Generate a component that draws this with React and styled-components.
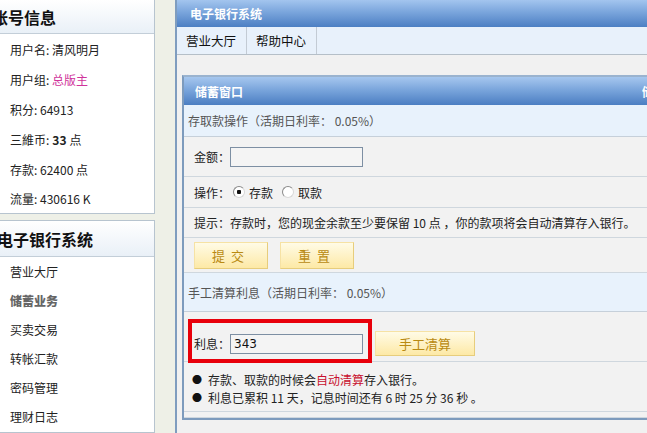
import styled, { createGlobalStyle } from 'styled-components';

const Global = createGlobalStyle`
  html, body {
    margin: 0;
    padding: 0;
    background: #eef0e7;
    overflow: hidden;
    font-family: "Noto Sans CJK SC", "DejaVu Sans", sans-serif;
    font-size: 12px;
    color: #222;
  }
`;

const Page = styled.div`
  display: flex;
  gap: 20px;
  height: 433px;
`;

const Sidebar = styled.div`
  width: 155px;
  flex: none;
  display: flex;
  flex-direction: column;
  gap: 6px;
`;

const Panel = styled.div`
  background: #fff;
  border-right: 1px solid #b7c4cf;
  border-bottom: 1px solid #b7c4cf;
  border-top: ${p => (p.$top ? '1px solid #b7c4cf' : 'none')};
  flex: ${p => (p.$grow ? 1 : 'none')};
`;

const PanelHead = styled.div`
  height: ${p => p.$h}px;
  display: flex;
  align-items: center;
  background: linear-gradient(#ffffff, #e9f0f7);
  border-bottom: 1px solid #c3ced8;
  font-size: 16px;
  font-weight: bold;
  color: #111;
  overflow: hidden;
  span {
    margin-left: ${p => p.$indent}px;
    white-space: nowrap;
  }
`;

const Item = styled.div`
  height: ${p => p.$h}px;
  display: flex;
  align-items: center;
  padding-left: 10px;
  color: ${p => (p.$active ? '#666' : '#222')};
  font-weight: ${p => (p.$active ? 800 : 'normal')};
  b { margin: 0 3px; }
`;

const Pink = styled.span`
  color: #d0339b;
`;

const Main = styled.div`
  flex: 1;
  min-width: 0;
  background: #f1f1f1;
  border-left: 2px solid #7f9dbf;
  overflow: hidden;
`;

const TopBar = styled.div`
  height: 27px;
  display: flex;
  align-items: center;
  padding-left: 13px;
  background: linear-gradient(#a3c5ee, #7aa5dc 45%, #4c7fc3);
  color: #fff;
  font-weight: bold;
`;

const Tabs = styled.div`
  height: 27px;
  display: flex;
  background: #e8f1fb;
  border-bottom: 1px solid #b5bfc8;
`;

const Tab = styled.div`
  padding: 0 10px 0 9px;
  display: flex;
  align-items: center;
  border-right: 1px solid #c3cbd4;
  font-size: 12.5px;
  color: #111;
`;

const Content = styled.div`
  padding: 20px 0 0 5px;
`;

const Box = styled.div`
  width: 520px;
  border: 2px solid #7d9bbd;
  border-top-color: #9ab3cf;
  background: #f2f2f2;
`;

const BoxHead = styled.div`
  height: 28px;
  display: flex;
  align-items: center;
  justify-content: space-between;
  padding: 0 14px 0 11px;
  background: linear-gradient(#a6c7ef, #76a2da 50%, #4b7ec2);
  color: #fff;
  font-weight: bold;
`;

const SectionHead = styled.div`
  height: ${p => p.$h}px;
  display: flex;
  align-items: center;
  padding-left: 4px;
  background: #e8f2fc;
  border-bottom: 1px solid #c6d0da;
  color: #555;
`;

const Row = styled.div`
  position: relative;
  height: ${p => p.$h}px;
  display: flex;
  align-items: center;
  gap: ${p => p.$gap || 0}px;
  padding: ${p => p.$pt || 0}px 0 0 10px;
  box-sizing: border-box;
  border-bottom: 1px solid #cfd7de;
  white-space: nowrap;
`;

const Field = styled.input`
  width: 133px;
  height: 20px;
  box-sizing: border-box;
  border: 1px solid #7d8fa3;
  background: #f4f4f4;
  padding: 0 3px;
  margin: 0 ${p => p.$mr || 0}px 0 0;
  font: 12px "DejaVu Sans", sans-serif;
  color: #111;
  outline: none;
`;

const Radio = styled.input`
  appearance: none;
  width: 12px;
  height: 12px;
  margin: 0 4px 0 3px;
  border-radius: 50%;
  border: 1px solid #8a8a8a;
  border-right-color: #d8d8d8;
  border-bottom-color: #d8d8d8;
  background: #fff;
  &:checked {
    background: radial-gradient(circle, #111 0 2px, #fff 2.5px);
  }
`;

const Choice = styled.label`
  display: flex;
  align-items: center;
  margin-right: 6px;
`;

const Button = styled.button`
  width: ${p => p.$w}px;
  height: ${p => p.$h}px;
  border: 1px solid #f6e2a4;
  border-right-color: #e7cd7c;
  border-bottom-color: #e7cd7c;
  background: linear-gradient(#fffbe6, #fde9a6);
  color: #b98a12;
  font: 13px "Noto Sans CJK SC", sans-serif;
  letter-spacing: ${p => p.$ls || 0}px;
  padding: 0;
`;

const Marker = styled.div`
  position: absolute;
  left: 4px;
  top: 7px;
  width: 184px;
  height: 44px;
  box-sizing: border-box;
  border: 4px solid #e8000b;
  pointer-events: none;
`;

const Notes = styled.ul`
  list-style: none;
  margin: 0;
  padding: 8px 0 5px 8px;
  border-bottom: 1px solid #cfd7de;
  li {
    height: 18px;
    display: flex;
    align-items: center;
    white-space: nowrap;
  }
  li::before {
    content: "●";
    font-size: 10px;
    margin-right: 6px;
    color: #111;
  }
`;

const Red = styled.span`
  color: #c8102e;
`;

const Spacer = styled.div`
  height: 5px;
  border-bottom: 1px solid #cfd7de;
`;

export default function App() {
  return (
    <>
      <Global />
      <Page>
        <Sidebar>
          <Panel>
            <PanelHead $h={33} $indent={-8}><span>帐号信息</span></PanelHead>
            <Item $h={30}>用户名: 清风明月</Item>
            <Item $h={30}>用户组: <Pink>&nbsp;总版主</Pink></Item>
            <Item $h={30}>积分: 64913</Item>
            <Item $h={30}>三維币: <b>33</b> 点</Item>
            <Item $h={30}>存款: 62400 点</Item>
            <Item $h={29}>流量: 430616 K</Item>
          </Panel>
          <Panel $top $grow>
            <PanelHead $h={35} $indent={-3}><span>电子银行系统</span></PanelHead>
            <Item $h={29}>营业大厅</Item>
            <Item $h={29} $active>储蓄业务</Item>
            <Item $h={29}>买卖交易</Item>
            <Item $h={29}>转帐汇款</Item>
            <Item $h={29}>密码管理</Item>
            <Item $h={29}>理财日志</Item>
          </Panel>
        </Sidebar>
        <Main>
          <TopBar>电子银行系统</TopBar>
          <Tabs>
            <Tab>营业大厅</Tab>
            <Tab>帮助中心</Tab>
          </Tabs>
          <Content>
            <Box>
              <BoxHead>
                <span>储蓄窗口</span>
                <span>储蓄说明</span>
              </BoxHead>
              <SectionHead $h={31}>存取款操作（活期日利率： 0.05%）</SectionHead>
              <Row $h={40}>金额：<Field defaultValue="" /></Row>
              <Row $h={31}>
                操作：
                <Choice><Radio type="radio" name="op" defaultChecked />存款</Choice>
                <Choice><Radio type="radio" name="op" />取款</Choice>
              </Row>
              <Row $h={30}>提示：存款时，您的现金余款至少要保留 10 点 ，你的款项将会自动清算存入银行。</Row>
              <Row $h={35} $gap={12}>
                <Button $w={74} $h={27} $ls={6}>提交</Button>
                <Button $w={74} $h={27} $ls={6}>重置</Button>
              </Row>
              <SectionHead $h={38}>手工清算利息（活期日利率： 0.05%）</SectionHead>
              <Row $h={50} $pt={14}>
                利息：<Field defaultValue="343" $mr={12} />
                <Button $w={100} $h={25}>手工清算</Button>
                <Marker />
              </Row>
              <Notes>
                <li>存款、取款的时候会<Red>自动清算</Red>存入银行。</li>
                <li>利息已累积 11 天，记息时间还有 6 时 25 分 36 秒 。</li>
              </Notes>
              <Spacer />
            </Box>
          </Content>
        </Main>
      </Page>
    </>
  );
}
